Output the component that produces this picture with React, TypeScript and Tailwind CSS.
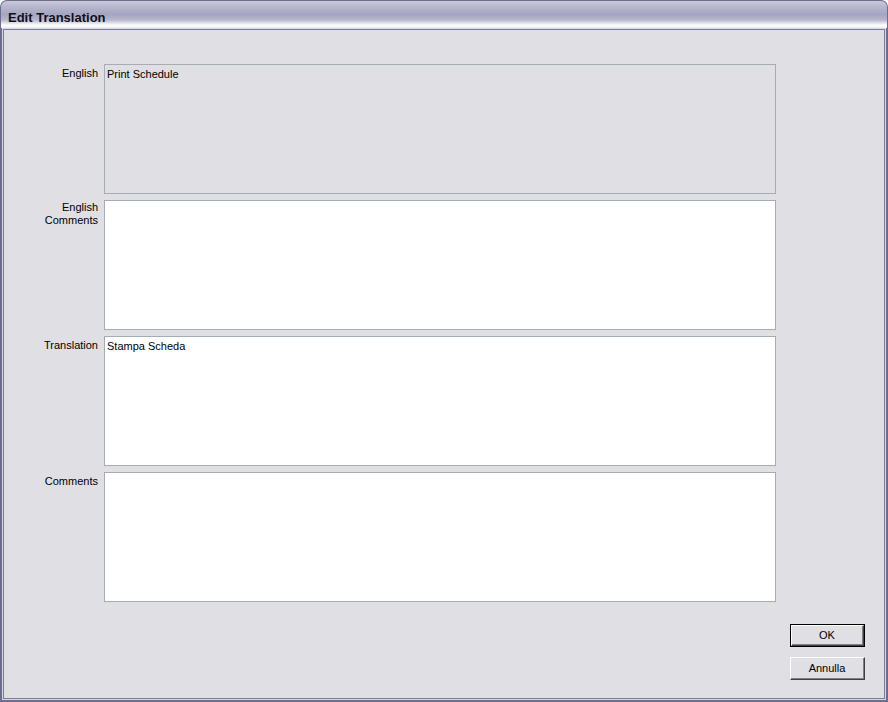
import React from "react";

const font = { fontFamily: '"Liberation Sans", Arial, sans-serif' };

function Field({ label, value, readOnly, multi }: { label: React.ReactNode; value?: string; readOnly?: boolean; multi?: boolean }) {
  return (
    <div className="flex h-[130px]">
      <div className={`w-[100px] pr-[6px] ${multi ? "pt-[1px]" : "pt-[3px]"} text-right text-[11px] leading-[13px] text-black`}>{label}</div>
      <div
        className={`w-[672px] h-[130px] border border-[#a5acb2] px-[2px] pt-[3px] text-[11px] leading-[13px] text-black ${
          readOnly ? "bg-[#e0dfe3]" : "bg-white"
        }`}
      >
        {value}
      </div>
    </div>
  );
}

function Btn({ children, def }: { children: React.ReactNode; def?: boolean }) {
  return (
    <div className={`w-[75px] h-[23px] ${def ? "border border-black" : ""}`}>
      <div className="w-full h-full border-t border-l border-white border-b border-r border-b-[#404040] border-r-[#404040]">
        <div className="w-full h-full border-b border-r border-b-[#808080] border-r-[#808080] bg-[#e0dfe3] flex items-center justify-center text-[11px] text-black">
          {children}
        </div>
      </div>
    </div>
  );
}

export default function App() {
  return (
    <div style={font} className="w-[888px] h-[702px] flex flex-col bg-[#6d6d8d] rounded-t-[7px] overflow-hidden">
      <div className="mx-[1px] mt-[1px] h-[27px] rounded-t-[6px] bg-[linear-gradient(to_bottom,#cacadc_0%,#b4b4cc_25%,#a5a5c1_50%,#b6b6cc_70%,#ffffff_90%,#eeeef3_100%)] flex items-center pl-[7px]">
        <span className="text-[13px] font-bold text-[#101018] pt-[6px]">Edit Translation</span>
      </div>
      <div className="flex-1 flex flex-col mx-[2px] mb-[2px] bg-[#d8d8e2] p-[1px]">
        <div className="flex-1 flex flex-col border border-[#7b7b9b] bg-[#e0dfe3]">
          <div className="flex flex-col gap-[6px] pt-[34px]">
            <Field label="English" value="Print Schedule" readOnly />
            <Field
              multi
              label={
                <>
                  English
                  <br />
                  Comments
                </>
              }
            />
            <Field label="Translation" value="Stampa Scheda" />
            <Field label="Comments" />
          </div>
          <div className="flex flex-col items-end gap-[10px] pt-[22px] pr-[19px]">
            <Btn def>OK</Btn>
            <Btn>Annulla</Btn>
          </div>
        </div>
      </div>
    </div>
  );
}
